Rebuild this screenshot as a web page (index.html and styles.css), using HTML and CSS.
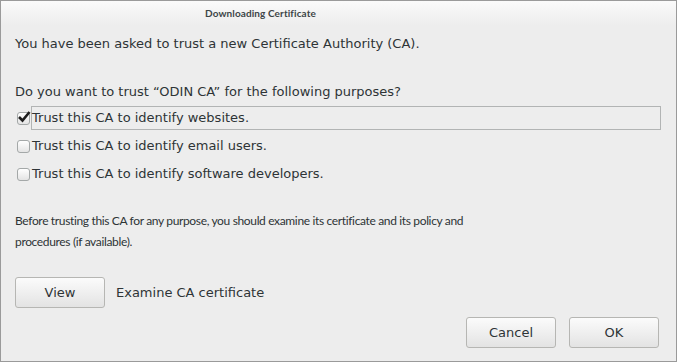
FILE: index.html
```html
<!DOCTYPE html>
<html lang="en">
<head>
    <meta charset="UTF-8">
    <title>Downloading Certificate</title>
    <link rel="stylesheet" href="styles.css">
</head>
<body>
    <div class="dialog">
        <div class="titlebar">Downloading Certificate</div>
        <div class="content">
            <p class="intro">You have been asked to trust a new Certificate Authority (CA).</p>
            <p class="question">Do you want to trust &#8220;ODIN CA&#8221; for the following purposes?</p>
            <div class="options">
                <label class="option focused">
                    <span class="check checked">
                        <svg width="14" height="14" viewBox="0 0 14 14"><path d="M2 7 L5.5 10.5 L12.5 2" fill="none" stroke="#1e1e1e" stroke-width="2.6"/></svg>
                    </span>
                    <span class="text">Trust this CA to identify websites.</span>
                </label>
                <label class="option">
                    <span class="check"></span>
                    <span class="text">Trust this CA to identify email users.</span>
                </label>
                <label class="option">
                    <span class="check"></span>
                    <span class="text">Trust this CA to identify software developers.</span>
                </label>
            </div>
            <p class="note">Before trusting this CA for any purpose, you should examine its certificate and its policy and procedures (if available).</p>
            <div class="view-row">
                <button class="btn">View</button>
                <span>Examine CA certificate</span>
            </div>
            <div class="actions">
                <button class="btn">Cancel</button>
                <button class="btn">OK</button>
            </div>
        </div>
    </div>
</body>
</html>
```

FILE: styles.css
```css
html, body{
    margin: 0;
    padding: 0;
}

body{
    font-family: "DejaVu Sans", sans-serif;
    font-size: 13px;
    color: #2e3436;
}

div.dialog{
    width: 675px;
    height: 360px;
    border: 1px solid #9a9a9a;
    background-color: #ededed;
    display: flex;
    flex-direction: column;
}

/* title sits left of centre, like the original window */
div.titlebar{
    height: 24px;
    line-height: 24px;
    text-align: center;
    padding-right: 156px;
    font-family: "Lato", sans-serif;
    font-weight: bold;
    font-size: 10px;
    letter-spacing: 0.1px;
    color: #3d4547;
    background: linear-gradient(#fafafa, #ededed);
}

div.content{
    padding: 0 14px 0 14px;
    flex: 1;
    display: flex;
    flex-direction: column;
}

p{
    margin: 0;
}

p.intro{
    margin-top: 10px;
    line-height: 18px;
}

p.question{
    margin-top: 30px;
    line-height: 18px;
}

div.options{
    margin-top: 5px;
    display: flex;
    flex-direction: column;
    gap: 4px;
}

label.option{
    display: flex;
    align-items: center;
    height: 24px;
}

span.check{
    width: 11px;
    height: 11px;
    margin-left: 2px;
    margin-right: 1px;
    border: 1px solid #a4a8a8;
    border-radius: 3px;
    background: linear-gradient(#ffffff, #e4e4e4);
    position: relative;
    flex: none;
}

span.check svg{
    position: absolute;
    left: -1px;
    top: -3px;
}

label.option span.text{
    flex: 1;
    line-height: 22px;
    padding-left: 0;
    border: 1px solid transparent;
}

label.focused span.text{
    border-color: #b2b4b4;
    margin-right: 1px;
}

p.note{
    margin-top: 24px;
    max-width: 470px;
    font-family: "Lato", sans-serif;
    font-size: 12px;
    letter-spacing: -0.35px;
    line-height: 21px;
}

div.view-row{
    margin-top: 25px;
    display: flex;
    align-items: center;
    gap: 11px;
}

button.btn{
    width: 90px;
    height: 31px;
    border: 1px solid #b6b6b3;
    border-radius: 3px;
    background: linear-gradient(#fbfbfb, #e3e3e3);
    font-family: "DejaVu Sans", sans-serif;
    font-size: 13px;
    color: #2e3436;
    padding: 0;
}

div.actions{
    margin-top: 9px;
    display: flex;
    justify-content: flex-end;
    gap: 13px;
    padding-right: 3px;
}
```
